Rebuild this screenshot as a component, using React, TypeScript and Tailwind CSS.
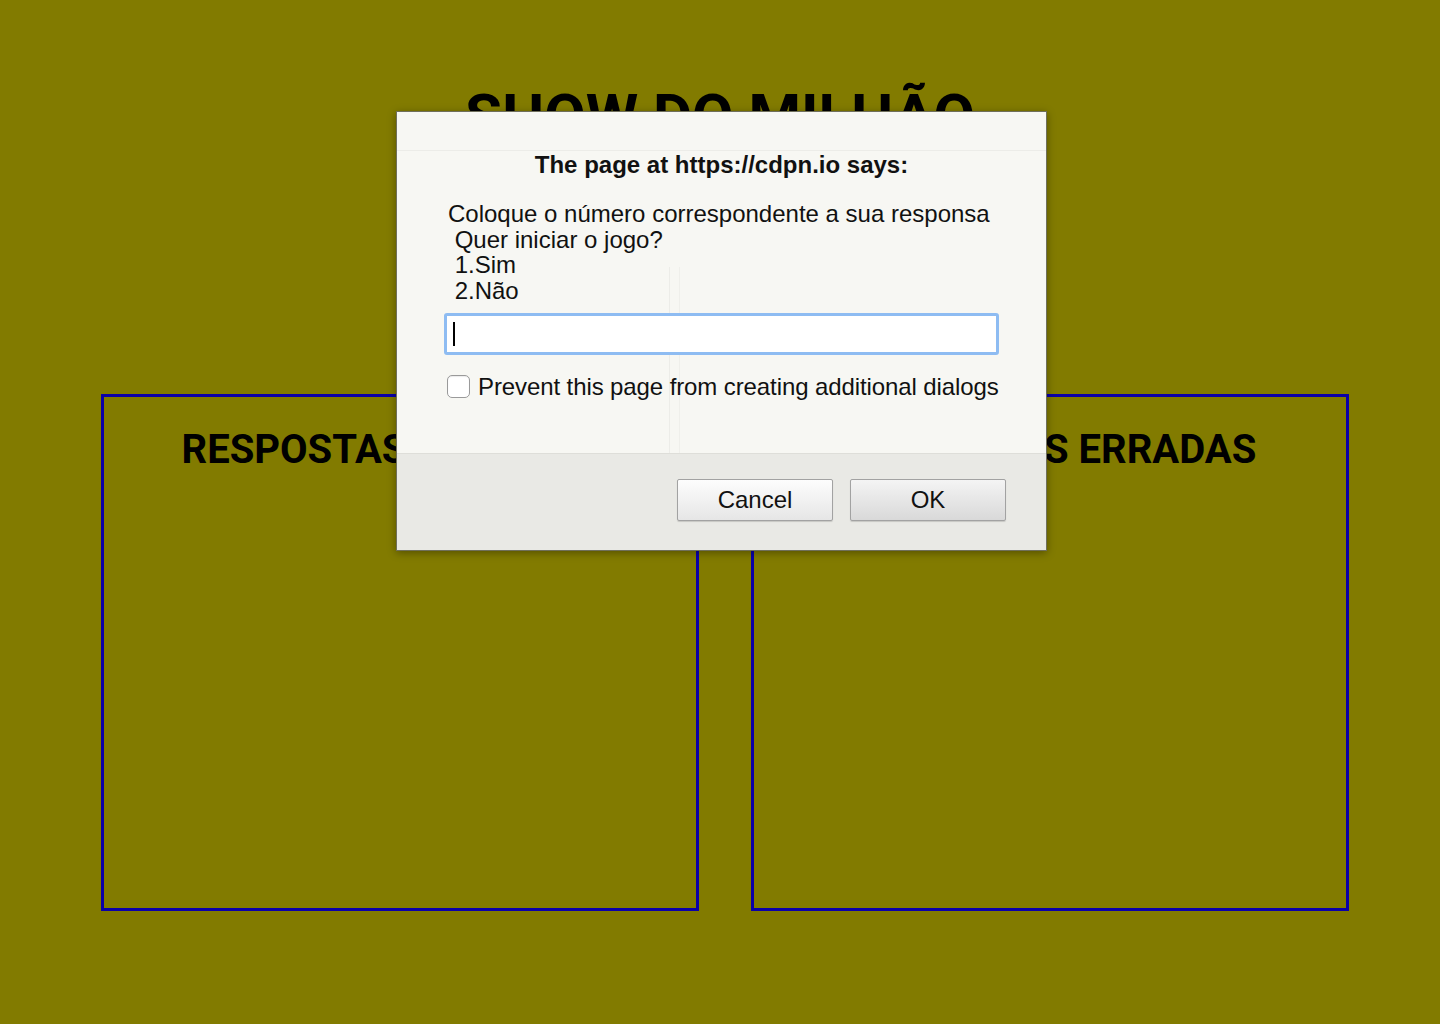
import React from "react";

const PromptDialog = () => {
  return (
    <div className="absolute left-[396px] top-[111px] w-[651px] h-[440px] flex flex-col bg-[#f7f7f3] border border-[#6f6f5c] shadow-[0_2px_8px_rgba(0,0,0,0.35)] font-['Liberation_Sans',Arial,sans-serif] text-[#111]">
      {/* faint ghost lines from the page underneath */}
      <div className="absolute left-0 right-0 top-[38px] h-px bg-[#ecece8]" />
      <div className="absolute left-[272px] top-[155px] bottom-0 w-px bg-[#ecece8]" />
      <div className="absolute left-[282px] top-[155px] bottom-0 w-px bg-[#efefeb]" />

      <div className="relative flex-1 px-[51px] pt-[40px]">
        <div className="text-center text-[24px] font-bold leading-[26px]">
          The page at https://cdpn.io says:
        </div>
        <div className="mt-[23px] text-[24px] leading-[25.7px] whitespace-pre">
          {"Coloque o número correspondente a sua responsa\n Quer iniciar o jogo?\n 1.Sim\n 2.Não"}
        </div>
        <div className="mt-[9px] ml-[-4px] w-[555px] h-[42px] rounded-[3px] border-[3px] border-[#8ebcf2] bg-white flex items-center px-[6px]">
          <div className="w-[2px] h-[24px] bg-black" />
        </div>
        <label className="mt-[19px] ml-[-1px] flex items-center gap-[8px] text-[24px] leading-[26px] whitespace-nowrap tracking-[-0.1px]">
          <span className="w-[23px] h-[23px] shrink-0 rounded-[5px] border border-[#9a9a9a] bg-white shadow-[inset_0_1px_1px_rgba(0,0,0,0.08)]" />
          Prevent this page from creating additional dialogs
        </label>
      </div>

      <div className="relative h-[97px] bg-[#e9e9e5] border-t border-[#deded9] flex justify-end items-start pt-[25px] pr-[40px] gap-[17px]">
        <button className="w-[156px] h-[42px] rounded-[2px] border border-[#a2a2a2] bg-gradient-to-b from-[#fdfdfd] to-[#e6e6e6] shadow-[0_1px_1px_rgba(0,0,0,0.15)] text-[24px] text-[#111]">
          Cancel
        </button>
        <button className="w-[156px] h-[42px] rounded-[2px] border border-[#a2a2a2] bg-gradient-to-b from-[#f4f4f4] to-[#d9d9d9] shadow-[0_1px_1px_rgba(0,0,0,0.15)] text-[24px] text-[#111]">
          OK
        </button>
      </div>
    </div>
  );
};

const ScoreBox = ({ title }: { title: string }) => (
  <div className="h-[517px] border-[3px] border-[#0a00a8] flex justify-center pt-[33px]">
    <h2 className="text-[40px] font-bold leading-none text-black">{title}</h2>
  </div>
);

export default function App() {
  return (
    <div className="relative w-[1440px] h-[1024px] overflow-hidden bg-[#827b00] font-['Roboto',sans-serif]">
      <h1 className="pt-[86px] text-center text-[60px] font-bold leading-none text-black">
        SHOW DO MILHÃO
      </h1>

      <div className="absolute top-[394px] left-[101px] grid grid-cols-[598px_598px] gap-[52px]">
        <ScoreBox title="RESPOSTAS CORRETAS" />
        <ScoreBox title="RESPOSTAS ERRADAS" />
      </div>

      <PromptDialog />
    </div>
  );
}
